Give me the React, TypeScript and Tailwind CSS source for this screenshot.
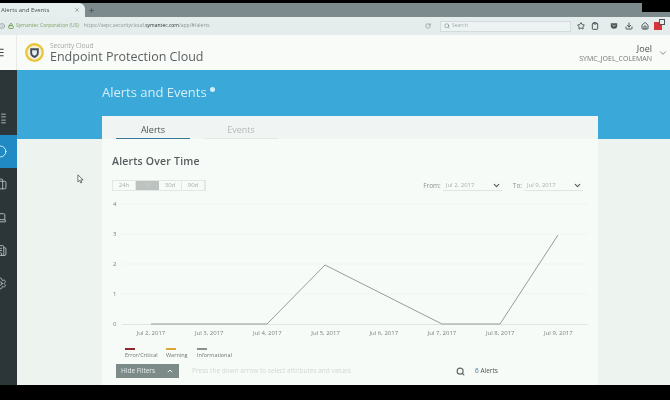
import React from 'react';
import { Star, Clipboard, Download, Home, RotateCw, Search, ChevronDown, ChevronUp, Lock, Info, X, Plus, Menu, LayoutList, Circle, Briefcase, Laptop, Building2, Settings } from 'lucide-react';

const DAYS = ['Jul 2, 2017', 'Jul 3, 2017', 'Jul 4, 2017', 'Jul 5, 2017', 'Jul 6, 2017', 'Jul 7, 2017', 'Jul 8, 2017', 'Jul 9, 2017'];
const RANGES = ['24h', '7d', '30d', '90d'];
const LEGEND = [
  { name: 'Error/Critical', color: 'bg-[#8e2a2f]', width: 'w-[32px]' },
  { name: 'Warning', color: 'bg-[#dca63a]', width: 'w-[22px]' },
  { name: 'Informational', color: 'bg-[#8a8f8f]', width: 'w-[34px]' },
];
const SIDE_ICONS = [LayoutList, Circle, Briefcase, Laptop, Building2, Settings];

const DateSelect = ({ value }: { value: string }) => (
  <div className="flex h-[10px] w-[59px] items-center justify-between border-b border-[#dfe5e1] pl-[3px] pr-[1px] text-[6px] text-[#a9afac]">
    <span>{value}</span>
    <ChevronDown className="h-[9px] w-[9px] text-[#4f5a5a]" strokeWidth={3} />
  </div>
);

const Chart = () => (
  <svg width="496" height="140" viewBox="0 0 496 140" className="block">
    {[8, 38, 68, 98].map(y => (
      <line key={y} x1="20" x2="486" y1={y} y2={y} stroke="#f0f5f1" strokeWidth="1" />
    ))}
    {[4, 3, 2, 1, 0].map((n, i) => (
      <text key={n} x="11" y={10 + i * 30} fontSize="6" fill="#777f7d">{n}</text>
    ))}
    <line x1="20" x2="486" y1="128.5" y2="128.5" stroke="#dfe5e1" />
    <polyline points="49,128 165,128 223,69 340,128 398,128 456,39" fill="none" stroke="#9a9c98" strokeWidth="1" />
    {DAYS.map((d, i) => (
      <text key={d} x={49 + i * 58.2} y="139" fontSize="6" fill="#777f7d" textAnchor="middle">{d}</text>
    ))}
  </svg>
);

export default function App() {
  return (
    <div className="flex h-[400px] w-[670px] flex-col overflow-hidden bg-black font-['Open_Sans',sans-serif] blur-[0.4px]">
      <div className="h-[3px] shrink-0 bg-black" />

      {/* tab strip */}
      <div className="flex h-[14px] shrink-0 items-center bg-[#7c8a8d]">
        <div className="flex h-full w-[85px] items-center justify-between rounded-tr-[6px] bg-[#e6eeee] pl-[1px] pr-[5px] text-[6px] text-[#4a5052]">
          <span>Alerts and Events</span>
          <X className="h-[6px] w-[6px] text-[#666]" />
        </div>
        <Plus className="ml-[3px] h-[7px] w-[7px] text-[#4d585b]" strokeWidth={3} />
        <div className="ml-auto h-[9px] w-[28px] self-start bg-black" />
      </div>

      {/* url bar */}
      <div className="flex h-[18px] shrink-0 items-center whitespace-nowrap bg-[#e4ecec] text-[5px]">
        <Info className="ml-[-1px] h-[6px] w-[6px] text-[#6d7778]" />
        <Lock className="ml-[3px] h-[6px] w-[6px] text-[#5f9a3a]" strokeWidth={3} />
        <span className="ml-[2px] text-[#7da56a]">Symantec Corporation (US)</span>
        <span className="ml-[5px] text-[#8b9799]">https://sepc.securitycloud.<span className="text-[#2c3335]">symantec.com</span>/app/#/alerts</span>
        <RotateCw className="ml-auto h-[6px] w-[6px] text-[#6d7778]" />
        <div className="ml-[9px] flex h-[11px] w-[131px] items-center gap-[2px] border border-[#d3dcdc] bg-[#edf3f2] pl-[3px] text-[#a2abac]">
          <Search className="h-[6px] w-[6px] text-[#6d7778]" />
          <span>Search</span>
        </div>
        <div className="ml-[6px] mr-[8px] flex items-center text-[#4a5558]">
          <Star className="h-[8px] w-[8px]" strokeWidth={3} />
          <Clipboard className="ml-[6px] h-[8px] w-[8px]" strokeWidth={3} />
          <svg viewBox="0 0 10 10" className="ml-[11px] h-[8px] w-[8px]">
            <path d="M1 1.5h8v3a4 4 0 0 1-8 0z" fill="#4a5558" />
            <path d="M3 3.5l2 2 2-2" fill="none" stroke="#e4ecec" strokeWidth="1" />
          </svg>
          <Download className="ml-[7px] h-[8px] w-[8px]" strokeWidth={3} />
          <Home className="ml-[8px] h-[8px] w-[8px]" strokeWidth={3} />
          <div className="relative ml-[5px] h-[8px] w-[8px] bg-[#d8353a]">
            <div className="absolute -right-[3px] -top-[3px] h-[6px] w-[6px] border border-[#4a5558] bg-[#e4ecec]" />
          </div>
        </div>
      </div>

      {/* app header */}
      <div className="flex h-[35px] shrink-0 items-center bg-[#f8fbf7]">
        <div className="flex h-full w-[17px] items-center border-r border-[#e6ebe7]">
          <Menu className="ml-[-6px] h-[11px] w-[11px] text-[#3c4446]" strokeWidth={2.5} />
        </div>
        <svg viewBox="0 0 20 20" className="ml-[8px] h-[19px] w-[19px]">
          <circle cx="10" cy="10" r="8.7" fill="#f5f1d8" stroke="#e8c53a" strokeWidth="2.4" />
          <path d="M5.5 5.5h9v5c0 2.7-2 4.3-4.5 5.3-2.500-1-4.500-2.600-4.500-5.300z" fill="#3f4d5c" />
          <path d="M7.500 7.500h5v3c0 1.400-1.100 2.400-2.500 3-1.400-.6-2.500-1.600-2.500-3z" fill="#e9edf0" />
        </svg>
        <div className="ml-[6px] flex flex-col">
          <span className="text-[6.5px] leading-[8px] text-[#a3a8a6]">Security Cloud</span>
          <span className="text-[12.5px] leading-[14px] text-[#5a6163]">Endpoint Protection Cloud</span>
        </div>
        <div className="ml-auto flex flex-col items-end">
          <span className="text-[9px] leading-[11px] text-[#4c5355]">Joel</span>
          <span className="mt-[1px] text-[7px] leading-[8px] text-[#6f7678]">SYMC_JOEL_COLEMAN</span>
        </div>
        <ChevronDown className="ml-[6px] mr-[2px] h-[10px] w-[10px] text-[#6f7678]" />
      </div>

      {/* main */}
      <div className="flex h-[315px] shrink-0">
        <div className="flex w-[17px] shrink-0 flex-col bg-[#2c3537] pt-[32px]">
          {SIDE_ICONS.map((Icon, i) => (
            <div key={i} className={`flex h-[33px] items-center ${i === 1 ? 'bg-[#1f8ac4] text-white' : 'text-[#c8cfcf]'}`}>
              <Icon className="ml-[-6px] h-[13px] w-[13px]" strokeWidth={1.5} />
            </div>
          ))}
        </div>

        <div className="relative flex-1 bg-[linear-gradient(to_bottom,#3aa8d8_69px,#edf3ef_69px)] pl-[85px]">
          {/* mouse cursor */}
          <svg viewBox="0 0 8 11" className="absolute left-[60px] top-[104px] h-[10px] w-[7px]">
            <path d="M1 .8v8l2-1.800 1.300 3 1.300-.6L4.300 6.500H7z" fill="#f6fbf7" stroke="#3c4446" strokeWidth=".8" />
          </svg>
          <div className="flex h-[46px] items-center pb-[1px] text-[13px] text-[#d5eef8]">
            Alerts and Events
            <span className="mb-[6px] ml-[3px] h-[5px] w-[5px] rounded-full bg-[#d5eef8]" />
          </div>

          <div className="h-[269px] w-[496px] bg-[#f6fbf7]">
            {/* tabs */}
            <div className="flex h-[23px] gap-[14px] bg-[#f0f4f2] pl-[14px]">
              <div className="flex w-[74px] items-center justify-center border-b border-[#3b7a96] pt-[5px] text-[9px] text-[#4d5557]">Alerts</div>
              <div className="flex w-[74px] items-center justify-center border-b border-[#e4e9e6] pt-[5px] text-[9px] text-[#b5bab8]">Events</div>
            </div>

            <div className="pl-[10px] pt-[15px] text-[10.5px] font-semibold leading-[14px] tracking-[0.2px] text-[#555c5e]">Alerts Over Time</div>

            <div className="mt-[12px] flex h-[11px] items-center pl-[10px] pr-[15px]">
              <div className="flex h-[11px] border border-[#e2e7e4] text-[6px] text-[#a9afac]">
                {RANGES.map(r => (
                  <div key={r} className={`flex w-[23px] items-center justify-center ${r === '7d' ? 'bg-[#bcc2c0] text-[#c9cecc]' : 'border-r border-[#e2e7e4]'}`}>{r}</div>
                ))}
              </div>
              <div className="ml-auto flex items-center gap-[2px] text-[6.5px] text-[#8b9290]">
                <span>From:</span>
                <DateSelect value="Jul 2, 2017" />
                <span className="ml-[9px]">To:</span>
                <DateSelect value="Jul 9, 2017" />
              </div>
            </div>

            <div className="mt-[5px]">
              <Chart />
            </div>

            {/* legend */}
            <div className="mt-[12px] flex h-[12px] gap-[9px] pl-[23px]">
              {LEGEND.map(l => (
                <div key={l.name} className={`flex ${l.width} flex-col whitespace-nowrap`}>
                  <div className={`mb-[1px] h-[2px] w-[10px] ${l.color}`} />
                  <span className="text-[5.5px] leading-[8px] text-[#6f7674]">{l.name}</span>
                </div>
              ))}
            </div>

            {/* filters */}
            <div className="mt-[4px] flex h-[14px] items-center pl-[14px]">
              <div className="flex h-[14px] w-[63px] items-center justify-between bg-[#7c8a88] pl-[5px] pr-[5px] text-[6.5px] text-[#e8eeec]">
                Hide Filters
                <ChevronUp className="h-[8px] w-[8px]" strokeWidth={3} />
              </div>
              <div className="ml-[13px] w-[264px] text-[6.5px] text-[#d3d8d5]">Press the down arrow to select attributes and values</div>
              <Search className="h-[9px] w-[9px] text-[#5f6765]" strokeWidth={3} />
              <div className="ml-[10px] text-[6.5px] text-[#4c5355]"><span className="text-[#3b7a96]">6</span> Alerts</div>
            </div>
          </div>
        </div>
      </div>

      <div className="flex-1 bg-black" />
    </div>
  );
}
